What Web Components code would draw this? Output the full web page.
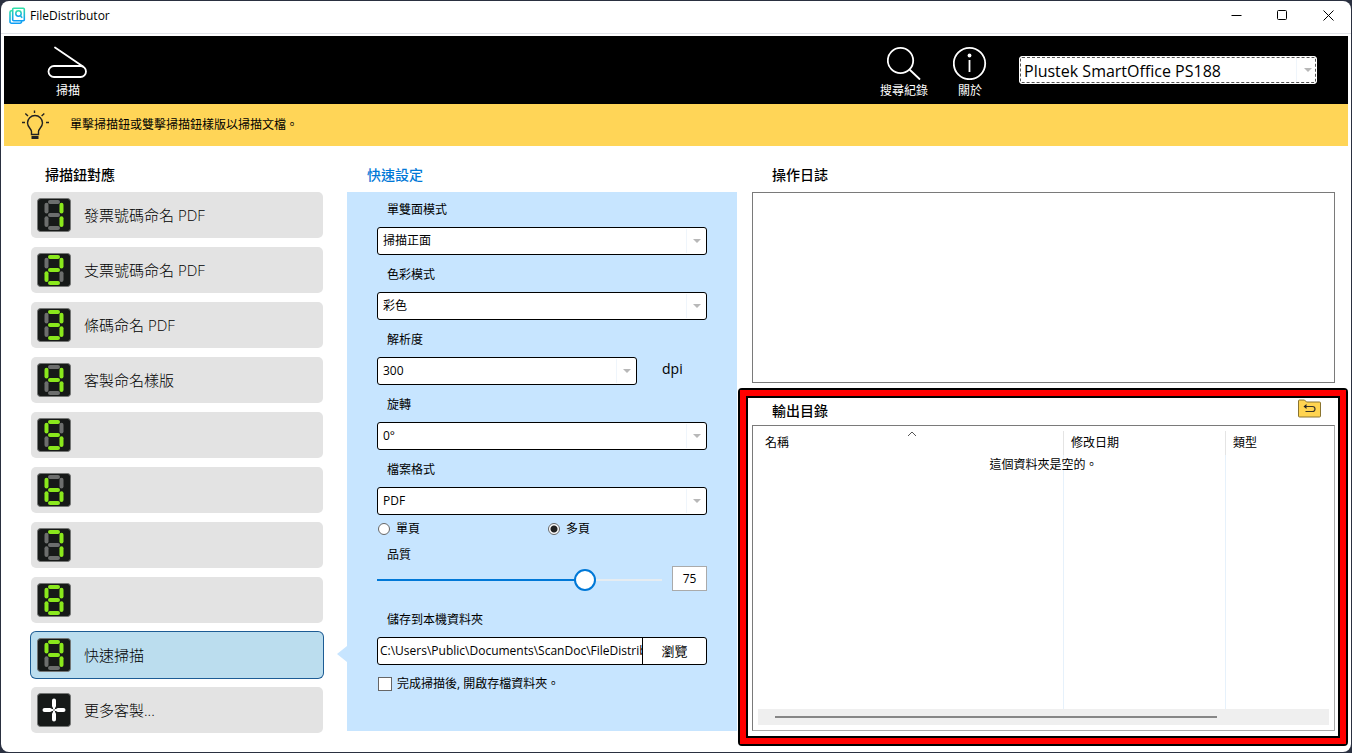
<!DOCTYPE html>
<html lang="zh-Hant">
<head>
<meta charset="utf-8">
<title>FileDistributor</title>
<style>
  html, body { margin: 0; height: 100%; background: #2a3040; }
  body {
    font: 12px/16px "Open Sans", "Noto Sans CJK TC", sans-serif;
    color: #000;
  }
</style>
</head>
<body>
<file-distributor></file-distributor>
<script>
  const base = `
    *, *::before, *::after { box-sizing: border-box; }
    [hidden] { display: none; }
    button, input, select { font: inherit; color: inherit; margin: 0; border-radius: 0; }
  `;

  function define(name, markup, setup) {
    const template = document.createElement('template');
    customElements.define(name, class extends HTMLElement {
      constructor() {
        super();
        this.attachShadow({ mode: 'open' });
      }
      connectedCallback() {
        if (this.shadowRoot.childNodes.length) return;
        template.innerHTML = `<style>${base}</style>` + (typeof markup === 'function' ? markup(this) : markup);
        this.shadowRoot.append(template.content.cloneNode(true));
        if (setup) setup(this, this.shadowRoot);
      }
    });
  }

  /* Title bar with caption buttons */
  define('title-bar', `
    <style>
      :host { display: flex; align-items: flex-start; height: 33px; margin: 0 -3px; padding-left: 8px; border-bottom: 1px solid #e2e4e8; }
      .logo { width: 17px; height: 17px; margin: 6px 4px 0 0; }
      h1 { flex: 1; margin: 7px 0 0; font-size: 12px; line-height: 16px; font-weight: 400; }
      button { width: 46px; height: 29px; padding: 0; border: 0; background: none; display: grid; place-items: center; }
      button svg { width: 11px; height: 11px; }
    </style>
    <svg class="logo" viewBox="0 0 17 17" fill="none" aria-hidden="true">
      <defs><linearGradient id="g" x1="0" y1="0" x2="0" y2="1"><stop offset="0" stop-color="#2fe0a8"/><stop offset="1" stop-color="#0e9df5"/></linearGradient></defs>
      <path d="M4.700 1.200h9.600a1 1 0 0 1 1 1v10.600a1 1 0 0 1-1 1H4.700a1 1 0 0 1-1-1V2.200a1 1 0 0 1 1-1z" stroke="url(#g)" stroke-width="1.600"/>
      <path d="M3.500 3.700h-1a1.500 1.500 0 0 0-1.500 1.500v9.500a1.500 1.500 0 0 0 1.500 1.500h8.500a1.500 1.500 0 0 0 1.500-1.500v-.7" stroke="url(#g)" stroke-width="1.600"/>
      <circle cx="9.500" cy="6.500" r="2.700" stroke="url(#g)" stroke-width="1.500"/>
      <path d="M11.200 8.500l2 2.200" stroke="#1ab6dc" stroke-width="1.600"/>
    </svg>
    <h1>FileDistributor</h1>
    <button type="button" aria-label="最小化"><svg viewBox="0 0 11 11"><path d="M.5 5.500h10" stroke="#000"/></svg></button>
    <button type="button" aria-label="最大化"><svg viewBox="0 0 11 11"><rect x=".5" y=".5" width="9" height="9" rx="1" fill="none" stroke="#000"/></svg></button>
    <button type="button" aria-label="關閉"><svg viewBox="0 0 11 11"><path d="M.5.5l10 10M10.500.5l-10 10" stroke="#000"/></svg></button>
  `);

  /* Toolbar action: icon in the default slot, caption from the attribute */
  define('tool-button', host => `
    <style>
      :host { display: block; color: #fff; }
      button { display: flex; flex-direction: column; align-items: center; gap: 3px; min-width: 48px; padding: 0; border: 0; background: none; white-space: nowrap; }
      ::slotted(svg) { display: block; height: 34px; }
    </style>
    <button type="button"><slot></slot><span>${host.getAttribute('label')}</span></button>
  `);

  /* Drop-down with optional label above and unit beside */
  define('select-field', host => {
    const label = host.getAttribute('label');
    const unit = host.getAttribute('unit');
    return `
    <style>
      :host { display: block; margin-bottom: 2px; }
      label { display: block; padding-left: 10px; line-height: 35px; }
      .row { display: flex; gap: 25px; }
      .box { position: relative; flex: 1; }
      select { appearance: none; display: block; width: 100%; height: 28px; padding: 0 26px 0 5px; border: 1px solid #000; border-radius: 3px; background: #fff; }
      .box::before { content: ""; position: absolute; top: 2px; bottom: 2px; right: 20px; width: 1px; background: #eff5fb; }
      .box::after { content: ""; position: absolute; top: 12px; right: 6px; width: 8px; height: 4px; background: #b8b8b8; clip-path: polygon(0 0, 100% 0, 50% 100%); }
      .unit { width: 45px; font-size: 14px; line-height: 24px; }
      :host([device]) { margin: 0; }
      :host([device]) label { display: none; }
      :host([device]) select { font-size: 16px; padding: 1px 26px 0 4px; border-color: #fff; outline: 1px dashed #555; outline-offset: -2px; }
      :host([device]) .box::after { right: 5px; }
    </style>
    <label for="s">${label}</label>
    <div class="row">
      <div class="box"><select id="s"><option>${host.getAttribute('value')}</option></select></div>
      ${unit ? `<span class="unit">${unit}</span>` : ''}
    </div>`;
  });

  /* Black toolbar */
  define('tool-bar', `
    <style>
      :host { display: flex; align-items: flex-start; height: 68px; margin-top: 2px; padding: 10px 31px 0 40px; background: #000; }
      .space { flex: 1; }
      tool-button + tool-button { margin-left: 18px; }
      select-field { width: 298px; margin: 10px 0 0 25px; }
    </style>
    <tool-button label="掃描">
      <svg width="42" viewBox="0 0 42 34" fill="none" stroke="#fff" stroke-width="1.800" stroke-linecap="round" stroke-linejoin="round">
        <rect x="1.500" y="20" width="37.500" height="11" rx="5.500"/><path d="M8 1.500l28 19"/>
      </svg>
    </tool-button>
    <div class="space"></div>
    <tool-button label="搜尋紀錄">
      <svg width="34" viewBox="0 0 34 34" fill="none" stroke="#fff" stroke-width="1.800" stroke-linecap="round">
        <circle cx="13.500" cy="14.500" r="12.700"/><path d="M23 24l9.500 9"/>
      </svg>
    </tool-button>
    <tool-button label="關於">
      <svg width="34" viewBox="0 0 34 34" fill="none" stroke="#fff" stroke-width="1.800">
        <circle cx="16.500" cy="17.500" r="15.700"/><path d="M16.500 14v12"/><circle cx="16.500" cy="9.500" r="1.900" fill="#fff" stroke="none"/>
      </svg>
    </tool-button>
    <select-field device label="掃描器" value="Plustek SmartOffice PS188"></select-field>
  `);

  /* Yellow hint strip */
  define('hint-bar', `
    <style>
      :host { display: flex; align-items: center; gap: 20px; height: 42px; padding-left: 18px; background: #ffd557; }
      p { margin: 0; }
    </style>
    <svg width="28" height="30" viewBox="0 0 28 30" fill="none" stroke="#222" stroke-width="1.400" aria-hidden="true">
      <path d="M10.500 24.500v-3c0-2.500-4-4.500-4-8.500a7.500 7.500 0 0 1 15 0c0 4-4 6-4 8.500v3z" transform="translate(-1 0)"/>
      <path d="M9.500 26h7v3h-7z" fill="#222" stroke="none"/>
      <path d="M12.500 .5v2.500M3.300 3.500l2.700 2.600M22.300 3.500l-2.700 2.600M0 12.500h3M24 12.500h3"/>
    </svg>
    <p><slot></slot></p>
  `);

  /* Seven-segment tile; "+" draws the add sign */
  const SEGMENTS = {
    a: 'M13 4h8', b: 'M24.500 6.700v6.800', c: 'M24.500 20.300v6.800', d: 'M13 30h8',
    e: 'M9.500 20.300v6.800', f: 'M9.500 6.700v6.800', g: 'M13 17h8'
  };
  const LIT = { 1: 'bc', 2: 'abged', 3: 'abgcd', 4: 'fgbc', 5: 'afgcd', 6: 'fgedc', 7: 'abc', 8: 'abcdefg', 9: 'abfgc' };
  define('led-digit', host => {
    const v = host.getAttribute('value');
    const marks = v === '+'
      ? '<path stroke="#fff" stroke-width="4" d="M17 7.500v5.500M17 21v5.500M7.500 17h5.500M21 17h5.500"/><path stroke="#fff" stroke-width="2" d="M17 12.500v3M17 18.500v3M12.500 17h3M18.500 17h3"/>'
      : Object.entries(SEGMENTS).map(([k, d]) => `<path d="${d}" stroke="${LIT[v].includes(k) ? '#8ae81c' : '#6c6e6d'}"/>`).join('');
    return `
    <style>:host { display: block; } svg { display: block; }</style>
    <svg width="34" height="34" viewBox="0 0 34 34" fill="none" stroke-width="4" stroke-linecap="round" aria-hidden="true">
      <rect x=".5" y=".5" width="33" height="33" rx="3" fill="#161918" stroke="#747675" stroke-width="1"/>${marks}
    </svg>`;
  });

  /* One row of the scan button list */
  define('scan-item', host => `
    <style>
      :host { display: block; position: relative; }
      button { display: flex; align-items: center; gap: 13px; width: 100%; height: 46px; padding: 0 6px; border: 0; border-radius: 5px; background: #e3e3e3; font-size: 15px; font-weight: 300; text-align: left; }
      :host([selected]) button { background: #bbddee; box-shadow: 0 0 0 1px #1d5c94; }
      :host([selected])::after { content: ""; position: absolute; right: -24px; top: 14px; width: 10px; height: 16px; background: #c7e5ff; clip-path: polygon(100% 0, 100% 100%, 0 50%); }
    </style>
    <button type="button" aria-label="按鈕 ${host.getAttribute('key')}"><led-digit value="${host.getAttribute('key')}"></led-digit><span><slot></slot></span></button>
  `);

  /* Column with a heading */
  define('panel-section', host => `
    <style>
      :host { display: flex; flex-direction: column; min-width: 0; }
      h2 { margin: 0; padding: 12px 0 0 20px; font-size: 14px; line-height: 34px; font-weight: 500; }
      :host([accent]) h2 { color: #0078d7; }
      :host([inset]) h2 { padding-left: 14px; }
    </style>
    <h2>${host.getAttribute('heading')}</h2><slot></slot>
  `);

  define('scan-list', `
    <style>:host { display: flex; flex-direction: column; gap: 9px; }</style>
    <scan-item key="1">發票號碼命名 PDF</scan-item>
    <scan-item key="2">支票號碼命名 PDF</scan-item>
    <scan-item key="3">條碼命名 PDF</scan-item>
    <scan-item key="4">客製命名樣版</scan-item>
    <scan-item key="5"></scan-item>
    <scan-item key="6"></scan-item>
    <scan-item key="7"></scan-item>
    <scan-item key="8"></scan-item>
    <scan-item key="9" selected>快速掃描</scan-item>
    <scan-item key="+">更多客製...</scan-item>
  `);

  define('quality-slider', `
    <style>
      :host { display: block; }
      label { display: block; padding: 3px 0 0 10px; line-height: 22px; }
      .row { display: flex; align-items: flex-start; gap: 10px; height: 28px; }
      input[type=range] { --fill: 73%; appearance: none; flex: 1; min-width: 0; height: 28px; background: linear-gradient(to right, #0078d7 var(--fill), #e6ecf1 var(--fill)) center / 100% 2px no-repeat; }
      input[type=range]::-webkit-slider-thumb { appearance: none; width: 22px; height: 22px; border: 2px solid #0078d7; border-radius: 50%; background: #fff; }
      input[type=text] { width: 35px; height: 25px; padding: 0; border: 1px solid #aaa; background: #fff; text-align: center; }
    </style>
    <label for="q">品質</label>
    <div class="row"><input id="q" type="range" min="0" max="100" value="75"><input id="v" type="text" value="75" aria-label="品質數值"></div>
  `, (host, root) => {
    const range = root.getElementById('q'), text = root.getElementById('v');
    range.addEventListener('input', () => {
      text.value = range.value;
      range.style.setProperty('--fill', range.value + '%');
    });
  });

  define('quick-settings', `
    <style>
      :host { display: block; padding: 0 30px 28px; background: #c7e5ff; }
      .pages { display: flex; height: 24px; padding-left: 1px; }
      .pages label { display: flex; align-items: center; gap: 6px; }
      .pages label:first-child { width: 170px; }
      .pages input { appearance: none; width: 12px; height: 12px; border: 1px solid #666; border-radius: 50%; background: #fff; }
      .pages input:checked { background: radial-gradient(circle, #222 0 3px, #fff 4px); }
      quality-slider { margin-bottom: 8px; }
      .save { display: block; padding-left: 10px; line-height: 35px; }
      .path { display: flex; height: 28px; border: 1px solid #000; border-radius: 3px; background: #fff; overflow: hidden; }
      .path input { flex: 1; min-width: 0; padding: 0 0 0 2px; border: 0; background: none; }
      .path button { width: 64px; padding: 0; border: 0; border-left: 1px solid #000; background: none; font-size: 13px; }
      .open { display: flex; align-items: center; gap: 5px; height: 38px; padding-left: 1px; }
      .open input { appearance: none; width: 14px; height: 14px; border: 1px solid #666; background: #fff; }
    </style>
    <select-field label="單雙面模式" value="掃描正面"></select-field>
    <select-field label="色彩模式" value="彩色"></select-field>
    <select-field label="解析度" value="300" unit="dpi"></select-field>
    <select-field label="旋轉" value="0°"></select-field>
    <select-field label="檔案格式" value="PDF"></select-field>
    <div class="pages">
      <label><input type="radio" name="pages">單頁</label>
      <label><input type="radio" name="pages" checked>多頁</label>
    </div>
    <quality-slider></quality-slider>
    <label class="save" for="path">儲存到本機資料夾</label>
    <div class="path"><input id="path" type="text" value="C:\\Users\\Public\\Documents\\ScanDoc\\FileDistributor"><button type="button">瀏覽</button></div>
    <label class="open"><input type="checkbox">完成掃描後, 開啟存檔資料夾。</label>
  `);

  define('activity-log', `
    <style>
      :host { display: block; height: 191px; border: 1px solid #7a7a7a; background: #fff; }
    </style>
  `);

  /* Output folder listing, framed by the red highlight */
  define('output-folder', `
    <style>
      :host { display: flex; flex-direction: column; flex: 1; position: relative; }
      .frame { position: absolute; inset: 5px -13px -15px -14px; border: 2px solid #000; border-radius: 4px; pointer-events: none; }
      .frame::after { content: ""; display: block; height: 100%; border: 6px solid #f00; box-shadow: inset 0 0 0 2px #000; }
      header { display: flex; align-items: flex-start; justify-content: space-between; height: 42px; padding: 14px 14px 0 20px; }
      h2 { margin: 0; font-size: 14px; line-height: 28px; font-weight: 500; }
      header button { padding: 0; border: 0; background: none; height: 23px; }
      header svg { display: block; }
      .list { position: relative; flex: 1; display: flex; flex-direction: column; padding: 5px; border: 1px solid #7a7a7a; border-bottom-color: #aaa; border-right-color: #aaa; background: #fff; }
      .grid { flex: 1; display: grid; }
      table { width: 100%; height: 100%; border-collapse: separate; border-spacing: 0; table-layout: fixed; }
      th { position: relative; height: 24px; padding: 0 7px; text-align: left; font-weight: 400; }
      th, td { border-right: 1px solid #e4e4e4; }
      td { border-color: #e6f1fb; padding: 0; }
      th:last-child, td:last-child { border-right: 0; }
      .caret { position: absolute; top: 0; left: 50%; margin-left: -4px; }
      .empty { position: absolute; inset: 31px 0 auto 0; margin: 0; text-align: center; }
      .bar { height: 16px; padding: 7px 112px 0 17px; background: #efefef; }
      .bar::before { content: ""; display: block; height: 2px; background: #868686; }
    </style>
    <header>
      <h2>輸出目錄</h2>
      <button type="button" aria-label="上一層資料夾">
        <svg width="24" height="20" viewBox="0 0 24 20" fill="none" stroke="#3a3528" aria-hidden="true">
          <path d="M1.500 17V2a1 1 0 0 1 1-1h5l2 2h13a1 1 0 0 1 1 1V17a1 1 0 0 1-1 1h-20a1 1 0 0 1-1-1z" fill="#ffd450" stroke="#8a7430"/>
          <path d="M8 7.500h7.500a2.500 2.500 0 0 1 2.500 2.500 2.500 2.500 0 0 1-2.500 2.500H8.500" stroke-width="1.200"/>
          <path d="M9.500 5l-3 2.500 3 2.500z" fill="#222" stroke="none"/>
        </svg>
      </button>
    </header>
    <div class="list">
      <div class="grid">
        <table>
          <colgroup><col style="width:306px"><col style="width:162px"><col></colgroup>
          <thead><tr>
            <th scope="col">名稱<svg class="caret" width="10" height="6" viewBox="0 0 10 6" fill="none" stroke="#555" aria-hidden="true"><path d="M1 5l4-4 4 4"/></svg></th>
            <th scope="col">修改日期</th>
            <th scope="col">類型</th>
          </tr></thead>
          <tbody><tr><td></td><td></td><td></td></tr></tbody>
        </table>
      </div>
      <p class="empty">這個資料夾是空的。</p>
      <div class="bar"></div>
    </div>
    <div class="frame"></div>
  `);

  define('file-distributor', `
    <style>
      :host { display: block; padding: 1px; min-height: 100vh; }
      .window { display: flex; flex-direction: column; min-height: calc(100vh - 2px); padding: 0 3px; border-radius: 8px; background: #fff; overflow: hidden; }
      main { display: grid; grid-template-columns: 292px 390px 1fr; padding: 0 13px 19px 27px; }
      panel-section:nth-child(2) { margin-left: 24px; margin-right: -24px; }
      .right { margin-left: 39px; padding-bottom: 2px; }
    </style>
    <div class="window">
      <title-bar></title-bar>
      <tool-bar></tool-bar>
      <hint-bar>單擊掃描鈕或雙擊掃描鈕樣版以掃描文檔。</hint-bar>
      <main>
        <panel-section inset heading="掃描鈕對應"><scan-list></scan-list></panel-section>
        <panel-section accent heading="快速設定"><quick-settings></quick-settings></panel-section>
        <panel-section class="right" heading="操作日誌"><activity-log></activity-log><output-folder></output-folder></panel-section>
      </main>
    </div>
  `);
</script>
</body>
</html>
